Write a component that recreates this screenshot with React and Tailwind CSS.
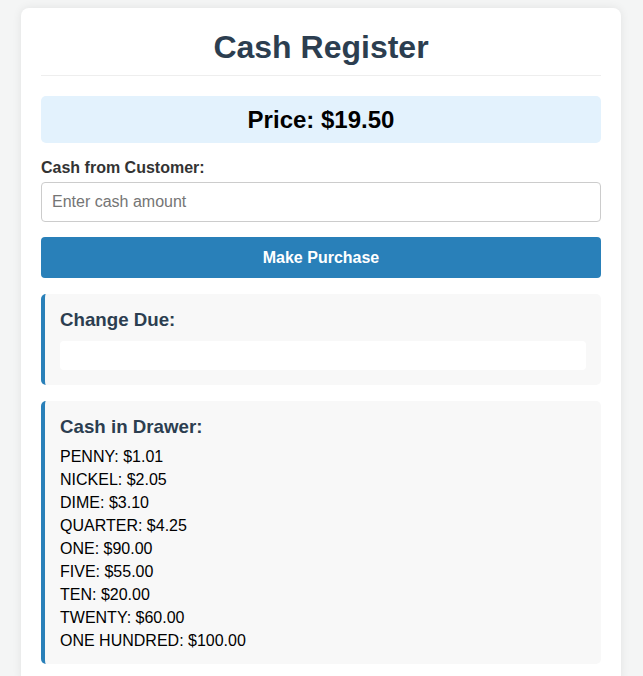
import React, { useState } from "react";

const cid = [
  ["PENNY", 1.01],
  ["NICKEL", 2.05],
  ["DIME", 3.1],
  ["QUARTER", 4.25],
  ["ONE", 90],
  ["FIVE", 55],
  ["TEN", 20],
  ["TWENTY", 60],
  ["ONE HUNDRED", 100],
];

const App = () => {
  const [cash, setCash] = useState("");

  return (
    <div className="min-h-screen bg-[#f4f5f5] pt-2 font-['Liberation_Sans',Arial,sans-serif]">
      <div className="ml-[21px] w-[600px] rounded-lg bg-white p-5 shadow-[0_0_10px_rgba(0,0,0,0.08)]">
        {/* header */}
        <h1 className="border-b border-[#eee] pb-[9px] text-center text-[32px] font-bold leading-[38px] text-[#2c3e50]">
          Cash Register
        </h1>

        <div className="mt-5 rounded-[5px] bg-[#e3f2fd] py-[10px] text-center text-[24px] font-bold leading-[27px] text-black">
          Price: $19.50
        </div>

        <label className="mt-[15px] mb-[5px] block text-[16px] font-bold leading-[19px] text-[#333]">
          Cash from Customer:
        </label>
        <input
          type="number"
          value={cash}
          onChange={(e) => setCash(e.target.value)}
          placeholder="Enter cash amount"
          className="block h-10 w-full rounded border border-[#ccc] px-[10px] text-[16px] text-[#333] placeholder:text-[#757575] outline-none"
        />

        <button className="mt-[15px] block h-[41px] w-full rounded bg-[#2980b9] text-[16px] font-bold text-white">
          Make Purchase
        </button>

        {/* change due */}
        <div className="mt-4 rounded-[5px] border-l-4 border-[#2980b9] bg-[#f8f8f8] p-[15px]">
          <h3 className="mb-[10px] text-[18.72px] font-bold leading-[22px] text-[#2c3e50]">
            Change Due:
          </h3>
          <div className="h-[29px] rounded bg-white"></div>
        </div>

        {/* drawer */}
        <div className="mt-4 rounded-[5px] border-l-4 border-[#2980b9] bg-[#f8f8f8] px-[15px] pt-[15px] pb-[12px]">
          <h3 className="mb-[7px] text-[18.72px] font-bold leading-[22px] text-[#2c3e50]">
            Cash in Drawer:
          </h3>
          <div className="text-[16px] leading-[23px] text-black">
            {cid.map(([name, amt]) => (
              <div key={name}>
                {name}: ${amt.toFixed(2)}
              </div>
            ))}
          </div>
        </div>
      </div>
    </div>
  );
};

export default App;
